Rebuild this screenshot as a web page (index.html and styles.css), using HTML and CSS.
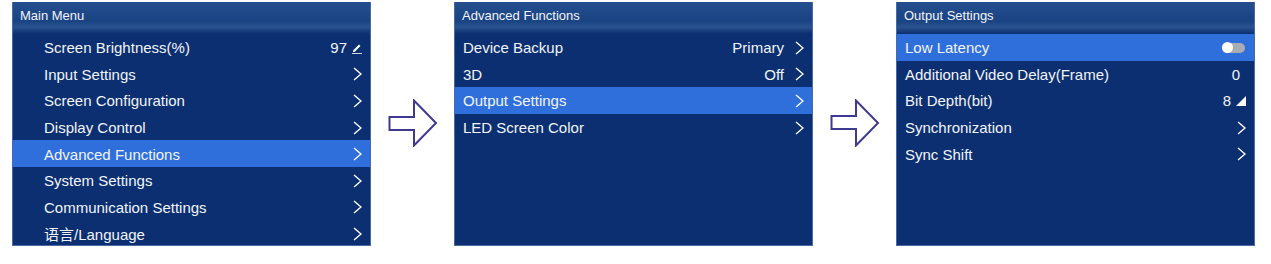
FILE: index.html
```html
<!DOCTYPE html>
<html>
  <head>
    <title>Menu Flow</title>
    <link rel="stylesheet" href="styles.css">
  </head>
  <body>
    <div class="flow">
      <div class="panel">
        <div class="panel-title">Main Menu</div>
        <div class="row indent">
          <span>Screen Brightness(%)</span>
          <span class="value">97
            <svg class="icon" width="10" height="12" viewBox="0 0 10 12">
              <path d="M1 8.5 L7 2.5 L8.5 4 L2.5 10 L1 10 Z" fill="#fff"></path>
              <rect x="0" y="11" width="10" height="1" fill="#d0d8e8"></rect>
            </svg>
          </span>
        </div>
        <div class="row indent"><span>Input Settings</span><svg class="chev" width="9" height="14" viewBox="0 0 9 14"><polyline points="1,1 8,7 1,13"></polyline></svg></div>
        <div class="row indent"><span>Screen Configuration</span><svg class="chev" width="9" height="14" viewBox="0 0 9 14"><polyline points="1,1 8,7 1,13"></polyline></svg></div>
        <div class="row indent"><span>Display Control</span><svg class="chev" width="9" height="14" viewBox="0 0 9 14"><polyline points="1,1 8,7 1,13"></polyline></svg></div>
        <div class="row indent active"><span>Advanced Functions</span><svg class="chev" width="9" height="14" viewBox="0 0 9 14"><polyline points="1,1 8,7 1,13"></polyline></svg></div>
        <div class="row indent"><span>System Settings</span><svg class="chev" width="9" height="14" viewBox="0 0 9 14"><polyline points="1,1 8,7 1,13"></polyline></svg></div>
        <div class="row indent"><span>Communication Settings</span><svg class="chev" width="9" height="14" viewBox="0 0 9 14"><polyline points="1,1 8,7 1,13"></polyline></svg></div>
        <div class="row indent"><span>语言/Language</span><svg class="chev" width="9" height="14" viewBox="0 0 9 14"><polyline points="1,1 8,7 1,13"></polyline></svg></div>
      </div>

      <div class="arrow-col">
        <svg width="50" height="48" viewBox="0 0 50 48">
          <path d="M1.5 18 H26 V1.5 L48 24 L26 46.5 V31 H1.5 Z" fill="#fff" stroke="#3d3a8f" stroke-width="2" stroke-linejoin="miter"></path>
        </svg>
      </div>

      <div class="panel">
        <div class="panel-title">Advanced Functions</div>
        <div class="row">
          <span>Device Backup</span>
          <span class="value">Primary<svg class="chev" width="9" height="14" viewBox="0 0 9 14"><polyline points="1,1 8,7 1,13"></polyline></svg></span>
        </div>
        <div class="row">
          <span>3D</span>
          <span class="value">Off<svg class="chev" width="9" height="14" viewBox="0 0 9 14"><polyline points="1,1 8,7 1,13"></polyline></svg></span>
        </div>
        <div class="row active"><span>Output Settings</span><svg class="chev" width="9" height="14" viewBox="0 0 9 14"><polyline points="1,1 8,7 1,13"></polyline></svg></div>
        <div class="row"><span>LED Screen Color</span><svg class="chev" width="9" height="14" viewBox="0 0 9 14"><polyline points="1,1 8,7 1,13"></polyline></svg></div>
      </div>

      <div class="arrow-col">
        <svg width="50" height="48" viewBox="0 0 50 48">
          <path d="M1.5 17 H26 V1.5 L48 24 L26 46.5 V30 H1.5 Z" fill="#fff" stroke="#3d3a8f" stroke-width="2" stroke-linejoin="miter"></path>
        </svg>
      </div>

      <div class="panel">
        <div class="panel-title">Output Settings</div>
        <div class="row active">
          <span>Low Latency</span>
          <span class="toggle"><span class="knob"></span></span>
        </div>
        <div class="row">
          <span>Additional Video Delay(Frame)</span>
          <span class="value pad-right">0</span>
        </div>
        <div class="row">
          <span>Bit Depth(bit)</span>
          <span class="value">8
            <svg class="icon" width="10" height="10" viewBox="0 0 10 10"><polygon points="10,0 10,10 0,10" fill="#fff"></polygon></svg>
          </span>
        </div>
        <div class="row"><span>Synchronization</span><svg class="chev" width="9" height="14" viewBox="0 0 9 14"><polyline points="1,1 8,7 1,13"></polyline></svg></div>
        <div class="row"><span>Sync Shift</span><svg class="chev" width="9" height="14" viewBox="0 0 9 14"><polyline points="1,1 8,7 1,13"></polyline></svg></div>
      </div>
    </div>
  </body>
</html>
```

FILE: styles.css
```css
body {
  margin: 0;
  background: #fff;
  font-family: "Liberation Sans", Arial, "Noto Sans CJK SC", sans-serif;
}
.flow {
  display: flex;
  padding: 2px 0 0 12px;
}
.panel {
  width: 359px;
  height: 244px;
  box-sizing: border-box;
  background: #0b2f70;
  border: 1px solid #4b6aa3;
  border-top: none;
  color: #f2f4f8;
}
.panel-title {
  height: 32px;
  box-sizing: border-box;
  padding: 6px 0 0 7px;
  font-size: 13px;
  background: linear-gradient(#254e8e, #1a4383 60%, #29538f 78%, #163c7a 92%, #0b2f70);
}
.row {
  height: 26.6px;
  display: flex;
  align-items: center;
  justify-content: space-between;
  padding: 1px 8px 0 8px;
  box-sizing: border-box;
  font-size: 15px;
}
.row.indent {
  padding-left: 31px;
}
.row.active {
  background: #2f6fdb;
}
.value {
  display: flex;
  align-items: center;
  gap: 5px;
}
.value .chev {
  margin-left: 6px;
}
.pad-right {
  padding-right: 6px;
}
.chev {
  fill: none;
  stroke: #fff;
  stroke-width: 1.4;
}
.icon {
  display: block;
}
.toggle {
  width: 23px;
  height: 10px;
  border-radius: 5px;
  background: #a9acb2;
  margin-right: 1px;
  display: flex;
  align-items: center;
}
.knob {
  width: 11px;
  height: 11px;
  border-radius: 50%;
  background: #fff;
}
.arrow-col {
  width: 83px;
  display: flex;
  align-items: center;
  justify-content: center;
  padding-bottom: 2px;
  box-sizing: border-box;
  height: 244px;
}
```
